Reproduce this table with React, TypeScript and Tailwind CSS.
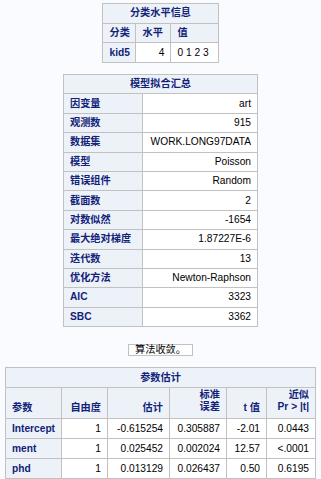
const head = "border border-[#c1c1c1] bg-[#edf2f9] text-[#112277] font-bold px-[6px] py-0 whitespace-nowrap";
const cell = "border border-[#c1c1c1] bg-white text-black px-[6px] py-0 whitespace-nowrap";

const levels = [["kid5", "4", "0 1 2 3"]];

const fitInfo = [
  ["因变量", "art"],
  ["观测数", "915"],
  ["数据集", "WORK.LONG97DATA"],
  ["模型", "Poisson"],
  ["错误组件", "Random"],
  ["截面数", "2"],
  ["对数似然", "-1654"],
  ["最大绝对梯度", "1.87227E-6"],
  ["迭代数", "13"],
  ["优化方法", "Newton-Raphson"],
  ["AIC", "3323"],
  ["SBC", "3362"],
];

const estimates = [
  ["Intercept", "1", "-0.615254", "0.305887", "-2.01", "0.0443"],
  ["ment", "1", "0.025452", "0.002024", "12.57", "<.0001"],
  ["phd", "1", "0.013129", "0.026437", "0.50", "0.6195"],
];

export default function App() {
  return (
    <div
      className="min-h-[479px] bg-[#fafbfe] pt-[3px] text-[10.2px] leading-none"
      style={{ fontFamily: '"Liberation Sans", "Noto Sans CJK SC", sans-serif' }}
    >
      {/* 分类水平信息 */}
      <table className="mx-auto w-[115px] table-fixed border-collapse">
        <colgroup>
          <col className="w-[33px]" />
          <col className="w-[35px]" />
          <col className="w-[47px]" />
        </colgroup>
        <thead>
          <tr className="h-[19.7px]">
            <th colSpan={3} className={`${head} text-center`}>分类水平信息</th>
          </tr>
          <tr className="h-[19.7px]">
            <th className={`${head} text-left`}>分类</th>
            <th className={`${head} text-left`}>水平</th>
            <th className={`${head} text-left`}>值</th>
          </tr>
        </thead>
        <tbody>
          {levels.map((r) => (
            <tr key={r[0]} className="h-[19.7px]">
              <th className={`${head} text-left`}>{r[0]}</th>
              <td className={`${cell} text-right`}>{r[1]}</td>
              <td className={`${cell} text-left whitespace-pre`}>{r[2]}</td>
            </tr>
          ))}
        </tbody>
      </table>

      {/* 模型拟合汇总 */}
      <table className="mx-auto mt-[11px] w-[194px] table-fixed border-collapse">
        <colgroup>
          <col className="w-[79px]" />
          <col className="w-[115px]" />
        </colgroup>
        <thead>
          <tr className="h-[19.4px]">
            <th colSpan={2} className={`${head} text-center`}>模型拟合汇总</th>
          </tr>
        </thead>
        <tbody>
          {fitInfo.map(([k, v]) => (
            <tr key={k} className="h-[19.4px]">
              <th className={`${head} text-left`}>{k}</th>
              <td className={`${cell} text-right`}>{v}</td>
            </tr>
          ))}
        </tbody>
      </table>

      <div className="mt-[17px] flex justify-center">
        <div className="h-[12px] border border-[#c1c1c1] bg-white px-[6px] text-black leading-[10px] whitespace-nowrap">
          算法收敛。
        </div>
      </div>

      {/* 参数估计 */}
      <table className="mx-auto mt-[11px] w-[310px] table-fixed border-collapse">
        <colgroup>
          <col className="w-[56px]" />
          <col className="w-[46px]" />
          <col className="w-[62px]" />
          <col className="w-[57px]" />
          <col className="w-[40px]" />
          <col className="w-[49px]" />
        </colgroup>
        <thead>
          <tr className="h-[20px]">
            <th colSpan={6} className={`${head} text-center`}>参数估计</th>
          </tr>
          <tr className="h-[31px]">
            <th className={`${head} text-left align-bottom pb-[5px]`}>参数</th>
            <th className={`${head} text-right align-bottom pb-[5px]`}>自由度</th>
            <th className={`${head} text-right align-bottom pb-[5px]`}>估计</th>
            <th className={`${head} text-right align-bottom pb-[5px] leading-[12px]`}>
              标准
              <br />
              误差
            </th>
            <th className={`${head} text-right align-bottom pb-[5px]`}>t 值</th>
            <th className={`${head} text-right align-bottom pb-[5px] leading-[12px]`}>
              近似
              <br />
              Pr &gt; |t|
            </th>
          </tr>
        </thead>
        <tbody>
          {estimates.map((r) => (
            <tr key={r[0]} className="h-[20px]">
              <th className={`${head} text-left`}>{r[0]}</th>
              {r.slice(1).map((v, i) => (
                <td key={i} className={`${cell} text-right`}>{v}</td>
              ))}
            </tr>
          ))}
        </tbody>
      </table>
    </div>
  );
}
